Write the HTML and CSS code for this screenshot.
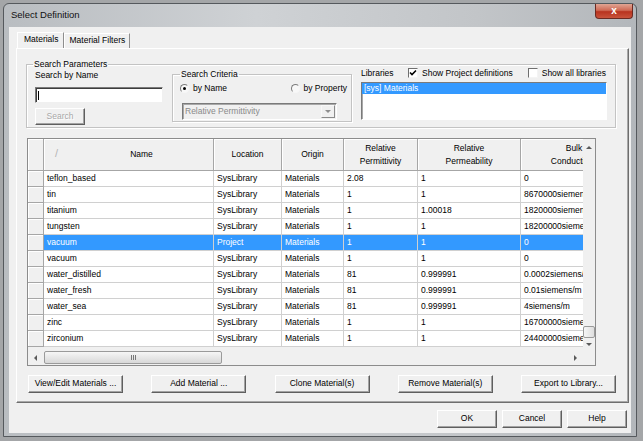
FILE: index.html
```html
<!DOCTYPE html>
<html lang="en">
<head>
    <meta charset="UTF-8">
    <title>Select Definition</title>
    <link rel="stylesheet" href="styles.css">
</head>
<body>
    <div class="window">
        <div class="titlebar">
            <span class="title">Select Definition</span>
            <span class="close">x</span>
        </div>
        <div class="client">
            <div class="tabs">
                <div class="tab active">Materials</div>
                <div class="tab">Material Filters</div>
            </div>
            <div class="panel">
                <fieldset class="group params">
                    <legend>Search Parameters</legend>
                    <div class="by-name">
                        <div class="label">Search by Name</div>
                        <div class="textbox"><span class="caret"></span></div>
                        <div class="btn disabled search-btn">Search</div>
                    </div>
                    <fieldset class="group criteria">
                        <legend>Search Criteria</legend>
                        <div class="radios">
                            <label class="radio-item"><span class="radio checked"></span>by Name</label>
                            <label class="radio-item"><span class="radio"></span>by Property</label>
                        </div>
                        <div class="combo">
                            <span class="combo-text">Relative Permittivity</span>
                            <span class="combo-btn"><span class="arrow-down"></span></span>
                        </div>
                    </fieldset>
                    <div class="libraries">
                        <div class="lib-head">
                            <span class="lib-label">Libraries</span>
                            <label class="check-item"><span class="check on"><svg width="8" height="8" viewBox="0 0 8 8"><path d="M1 3.5 L3 5.5 L7 1.5" fill="none" stroke="#000" stroke-width="1.6"/></svg></span>Show Project definitions</label>
                            <label class="check-item"><span class="check"></span>Show all libraries</label>
                        </div>
                        <div class="listbox">
                            <div class="list-item selected">[sys] Materials</div>
                        </div>
                    </div>
                </fieldset>

                <div class="grid">
                    <div class="view">
                        <div class="cells">
                            <div class="row head">
                                <div class="cell rh"></div>
                                <div class="cell name-head"><span class="sort">/</span>Name</div>
                                <div class="cell">Location</div>
                                <div class="cell">Origin</div>
                                <div class="cell">Relative<br>Permittivity</div>
                                <div class="cell">Relative<br>Permeability</div>
                                <div class="cell">Bulk<br>Conductivity</div>
                            </div>
                            <div class="row"><div class="cell rh"></div><div class="cell">teflon_based</div><div class="cell">SysLibrary</div><div class="cell">Materials</div><div class="cell">2.08</div><div class="cell">1</div><div class="cell">0</div></div>
                            <div class="row"><div class="cell rh"></div><div class="cell">tin</div><div class="cell">SysLibrary</div><div class="cell">Materials</div><div class="cell">1</div><div class="cell">1</div><div class="cell">8670000siemens/m</div></div>
                            <div class="row"><div class="cell rh"></div><div class="cell">titanium</div><div class="cell">SysLibrary</div><div class="cell">Materials</div><div class="cell">1</div><div class="cell">1.00018</div><div class="cell">1820000siemens/m</div></div>
                            <div class="row"><div class="cell rh"></div><div class="cell">tungsten</div><div class="cell">SysLibrary</div><div class="cell">Materials</div><div class="cell">1</div><div class="cell">1</div><div class="cell">18200000siemens/m</div></div>
                            <div class="row selected"><div class="cell rh"></div><div class="cell">vacuum</div><div class="cell">Project</div><div class="cell">Materials</div><div class="cell">1</div><div class="cell">1</div><div class="cell">0</div></div>
                            <div class="row"><div class="cell rh"></div><div class="cell">vacuum</div><div class="cell">SysLibrary</div><div class="cell">Materials</div><div class="cell">1</div><div class="cell">1</div><div class="cell">0</div></div>
                            <div class="row"><div class="cell rh"></div><div class="cell">water_distilled</div><div class="cell">SysLibrary</div><div class="cell">Materials</div><div class="cell">81</div><div class="cell">0.999991</div><div class="cell">0.0002siemens/m</div></div>
                            <div class="row"><div class="cell rh"></div><div class="cell">water_fresh</div><div class="cell">SysLibrary</div><div class="cell">Materials</div><div class="cell">81</div><div class="cell">0.999991</div><div class="cell">0.01siemens/m</div></div>
                            <div class="row"><div class="cell rh"></div><div class="cell">water_sea</div><div class="cell">SysLibrary</div><div class="cell">Materials</div><div class="cell">81</div><div class="cell">0.999991</div><div class="cell">4siemens/m</div></div>
                            <div class="row"><div class="cell rh"></div><div class="cell">zinc</div><div class="cell">SysLibrary</div><div class="cell">Materials</div><div class="cell">1</div><div class="cell">1</div><div class="cell">16700000siemens/m</div></div>
                            <div class="row"><div class="cell rh"></div><div class="cell">zirconium</div><div class="cell">SysLibrary</div><div class="cell">Materials</div><div class="cell">1</div><div class="cell">1</div><div class="cell">24400000siemens/m</div></div>
                        </div>
                        <div class="vscroll">
                            <div class="sb-btn up"><span class="tri-up"></span></div>
                            <div class="sb-track"></div>
                            <div class="sb-thumb v-thumb"></div>
                            <div class="sb-btn down"><span class="tri-down"></span></div>
                        </div>
                    </div>
                    <div class="hscroll">
                        <div class="sb-btn left"><span class="tri-left"></span></div>
                        <div class="sb-thumb h-thumb"><span class="grip"></span></div>
                        <div class="sb-track"></div>
                        <div class="sb-btn right"><span class="tri-right"></span></div>
                        <div class="corner"></div>
                    </div>
                </div>

                <div class="actions">
                    <div class="btn">View/Edit Materials ...</div>
                    <div class="btn">Add Material ...</div>
                    <div class="btn">Clone Material(s)</div>
                    <div class="btn">Remove Material(s)</div>
                    <div class="btn">Export to Library...</div>
                </div>
            </div>
            <div class="dialog-buttons">
                <div class="btn small">OK</div>
                <div class="btn small">Cancel</div>
                <div class="btn small">Help</div>
            </div>
        </div>
    </div>
</body>
</html>
```

FILE: styles.css
```css
body {
    margin: 0;
    width: 643px;
    height: 441px;
    overflow: hidden;
    background: #a4a6a8;
    font-family: "Liberation Sans", Arial, sans-serif;
    font-size: 8.5px;
    color: #000;
}

/* window frame */
.window {
    margin: 3px 0 0 3px;
    width: 634px;
    height: 434px;
    box-sizing: border-box;
    border: 1px solid #55595d;
    border-radius: 6px 6px 0 0;
    background: linear-gradient(90deg, #b9bdc1, #cfd2d5 40%, #c2c5c8 75%, #b3b7bb);
    padding: 0 5px 3px 5px;
    display: flex;
    flex-direction: column;
}
.titlebar {
    height: 23px;
    display: flex;
    justify-content: space-between;
    align-items: flex-start;
}
.title {
    padding: 5px 0 0 2px;
    font-size: 9.5px;
    line-height: 12px;
    color: #111;
}
.close {
    width: 38px;
    height: 15px;
    margin: 0 -2px 0 0;
    box-sizing: border-box;
    border: 1px solid #6b2a22;
    border-top: none;
    border-radius: 0 0 4px 4px;
    background: linear-gradient(#e0a594, #cf6a55 45%, #b8331f 55%, #c9533b);
    color: #fff;
    font-weight: bold;
    font-size: 10px;
    line-height: 13px;
    text-align: center;
}
.client {
    flex: 1;
    background: #f0f0f0;
    display: flex;
    flex-direction: column;
    padding: 6px 2px 5px 7px;
}

/* tabs */
.tabs {
    display: flex;
    height: 15px;
    padding-left: 1px;
}
.tab {
    box-sizing: border-box;
    height: 15px;
    padding: 0 4px;
    line-height: 13px;
    border: 1px solid;
    border-color: #fff #8e8e8e transparent #fff;
    border-bottom: none;
}
.tab.active {
    height: 16px;
    padding: 0 5px 0 6px;
    margin-top: -1px;
    position: relative;
    background: #f0f0f0;
    z-index: 1;
}
.panel {
    height: 355px;
    box-sizing: border-box;
    border: 1px solid;
    border-color: #fff #6e6e6e #6e6e6e #fff;
    box-shadow: inset -1px -1px 0 #a8a8a8;
    padding: 10px 12px 0 9px;
}

/* group boxes */
.group {
    margin: 0;
    border: 1px solid #c3c3c3;
    box-shadow: inset 1px 1px 0 #fff, 1px 1px 0 #fff;
}
.group legend {
    padding: 0 1px;
    margin-left: -2px;
    line-height: 11px;
}
.params {
    display: flex;
    gap: 9px;
    padding: 0 8px 2px 8px;
    height: 69px;
    box-sizing: border-box;
}
.by-name {
    width: 128px;
}
.label {
    line-height: 11px;
}
.textbox {
    margin-top: 6px;
    height: 16px;
    box-sizing: border-box;
    background: #fff;
    border: 1px solid;
    border-color: #7a7a7a #f0f0f0 #f0f0f0 #7a7a7a;
    box-shadow: inset 1px 1px 0 #3c3c3c;
    padding: 3px 0 0 2px;
}
.caret {
    display: block;
    width: 1px;
    height: 9px;
    background: #000;
}
.btn {
    box-sizing: border-box;
    height: 18px;
    border: 1px solid;
    border-color: #fff #5f5f5f #5f5f5f #fff;
    box-shadow: inset -1px -1px 0 #a3a3a3;
    background: #f0f0f0;
    text-align: center;
    line-height: 15px;
}
.search-btn {
    margin-top: 5px;
    width: 50px;
    height: 17px;
    line-height: 14px;
}
.btn.disabled {
    color: #a8a8a8;
    text-shadow: 1px 1px 0 #fff;
}

.criteria {
    width: 180px;
    height: 53px;
    box-sizing: border-box;
    margin-top: -1px;
    padding: 0 14px 0 9px;
}
.radios {
    display: flex;
    justify-content: space-between;
    margin: 2px -10px 0 -2px;
    height: 12px;
    line-height: 12px;
}
.radio-item, .check-item {
    display: flex;
    align-items: center;
}
.radio {
    width: 9px;
    height: 9px;
    box-sizing: border-box;
    border-radius: 50%;
    border: 1px solid;
    border-color: #7c7c7c #f6f6f6 #f6f6f6 #7c7c7c;
    background: #f8f8f8;
    margin-right: 4px;
    display: flex;
    align-items: center;
    justify-content: center;
}
.radio.checked::after {
    content: "";
    width: 3px;
    height: 3px;
    border-radius: 50%;
    background: #000;
}
.combo {
    margin-top: 9px;
    height: 17px;
    box-sizing: border-box;
    border: 1px solid;
    border-color: #7a7a7a #fff #fff #7a7a7a;
    box-shadow: inset 1px 1px 0 #a8a8a8;
    background: #f0f0f0;
    display: flex;
    justify-content: space-between;
    color: #8a8a8a;
    line-height: 15px;
    padding-left: 2px;
}
.combo-btn {
    width: 14px;
    height: 13px;
    margin: 1px 1px 0 0;
    box-sizing: border-box;
    border: 1px solid;
    border-color: #f8f8f8 #8a8a8a #8a8a8a #f8f8f8;
    display: flex;
    align-items: center;
    justify-content: center;
}
.arrow-down, .tri-down {
    width: 0;
    height: 0;
    border-left: 3px solid transparent;
    border-right: 3px solid transparent;
    border-top: 3px solid #8e8e8e;
}

.libraries {
    width: 246px;
}
.lib-head {
    display: flex;
    margin-top: -2px;
    height: 10px;
    line-height: 10px;
}
.lib-label {
    width: 47px;
}
.check {
    width: 10px;
    height: 10px;
    box-sizing: border-box;
    border: 1px solid;
    border-color: #6f6f6f #f4f4f4 #f4f4f4 #6f6f6f;
    background: #fff;
    margin-right: 4px;
    display: flex;
    align-items: center;
    justify-content: center;
}
.check-item + .check-item {
    margin-left: 15px;
}
.listbox {
    margin-top: 4px;
    height: 38px;
    box-sizing: border-box;
    background: #fff;
    border: 1px solid;
    border-color: #7a7a7a #fff #fff #7a7a7a;
    box-shadow: inset 1px 1px 0 #a8a8a8;
}
.list-item {
    height: 11px;
    line-height: 11px;
    padding-left: 2px;
}
.list-item.selected {
    background: #3399ff;
    color: #fff;
}

/* data grid */
.grid {
    margin: 10px 0 0 1px;
    width: 569px;
    box-sizing: border-box;
    border: 1px solid #8c8c8c;
    background: #f0f0f0;
}
.view {
    display: flex;
    height: 211px;
}
.cells {
    width: 555px;
    overflow: hidden;
}
.row {
    display: grid;
    grid-template-columns: 16px 170px 68px 62px 74px 103px 107px;
    width: 600px;
    height: 16px;
}
.cell {
    box-sizing: border-box;
    background: #fff;
    border-right: 1px solid #d0d0d0;
    border-bottom: 1px solid #d0d0d0;
    padding: 0 2px 0 3px;
    line-height: 15px;
    white-space: nowrap;
    overflow: hidden;
}
.cell.rh {
    background: #f0f0f0;
    border-color: #a6a6a6;
    box-shadow: inset 1px 1px 0 #fff;
}
.row.head {
    height: 32px;
}
.row.head .cell {
    background: #f0f0f0;
    border-color: #a6a6a6;
    box-shadow: inset 1px 1px 0 #fff;
    display: flex;
    align-items: center;
    justify-content: center;
    text-align: center;
    line-height: 13px;
    padding: 0 2px;
}
.row.head .name-head {
    padding-left: 28px;
    position: relative;
}
.sort {
    position: absolute;
    left: 11px;
    top: 8px;
    font-size: 11px;
    color: #b5b5b5;
}
.row.selected .cell {
    background: #3399ff;
    color: #fff;
}
.row.selected .cell.rh {
    background: #f0f0f0;
}

/* scrollbars */
.vscroll {
    width: 12px;
    display: flex;
    flex-direction: column;
    background: #f0f0f0;
}
.sb-btn {
    display: flex;
    align-items: center;
    justify-content: center;
}
.vscroll .up {
    height: 16px;
}
.vscroll .down {
    height: 12px;
}
.sb-track {
    flex: 1;
}
.sb-thumb {
    box-sizing: border-box;
    border: 1px solid #9a9a9a;
    border-radius: 2px;
    background: linear-gradient(90deg, #f6f6f6, #dedede);
}
.v-thumb {
    height: 12px;
}
.tri-up {
    width: 0;
    height: 0;
    border-left: 3px solid transparent;
    border-right: 3px solid transparent;
    border-bottom: 3px solid #5a5a5a;
}
.tri-down {
    border-top-color: #5a5a5a;
}
.hscroll {
    display: flex;
    height: 15px;
    background: #f0f0f0;
}
.hscroll .sb-btn {
    width: 15px;
}
.tri-left, .tri-right {
    width: 0;
    height: 0;
    border-top: 3px solid transparent;
    border-bottom: 3px solid transparent;
}
.tri-left {
    border-right: 3px solid #5a5a5a;
}
.tri-right {
    border-left: 3px solid #5a5a5a;
}
.h-thumb {
    width: 178px;
    height: 13px;
    margin: 1px 0 0 1px;
    background: linear-gradient(#f6f6f6, #d8d8d8);
    display: flex;
    align-items: center;
    justify-content: center;
}
.grip {
    width: 5px;
    height: 5px;
    background: repeating-linear-gradient(90deg, #777 0 1px, transparent 1px 2px);
}
.corner {
    width: 12px;
}

/* buttons */
.actions {
    display: flex;
    justify-content: space-between;
    margin: 9px 0 0 2px;
}
.actions .btn {
    width: 95px;
}
.dialog-buttons {
    display: flex;
    justify-content: flex-end;
    gap: 5px;
    margin-top: 7px;
    padding-right: 2px;
}
.btn.small {
    width: 60px;
}
```
